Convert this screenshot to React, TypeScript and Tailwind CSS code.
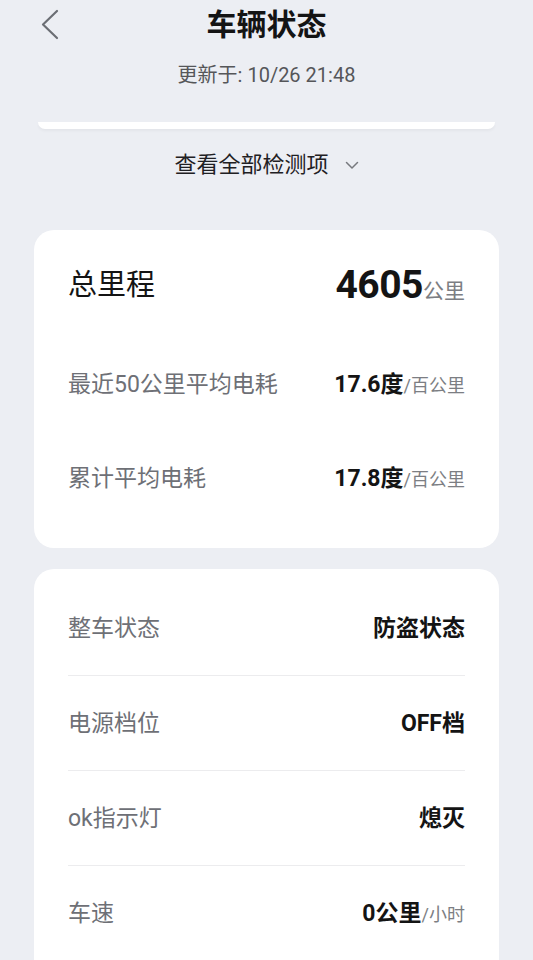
import React from "react";

const rows = [
  { label: "整车状态", value: "防盗状态" },
  { label: "电源档位", value: "OFF档" },
  { label: "ok指示灯", value: "熄灭" },
  { label: "车速", value: "0公里", unit: "/小时" },
];

export default function App() {
  return (
    <div className="h-[960px] w-[533px] bg-[#eceef3] font-['Roboto','Noto_Sans_CJK_SC',sans-serif] overflow-hidden">
      {/* header */}
      <div className="relative h-[50px] flex items-center justify-center">
        <svg
          className="absolute left-[40px] top-[9px]"
          width="20"
          height="31"
          viewBox="0 0 20 31"
          fill="none"
        >
          <path d="M17 2 L3 15.5 L17 29" stroke="#6b6e74" strokeWidth="2.2" strokeLinecap="round" strokeLinejoin="round" />
        </svg>
        <h1 className="text-[30px] font-bold text-[#141414] leading-none">车辆状态</h1>
      </div>
      <div className="mt-[11px] h-[28px] flex items-center justify-center text-[20px] text-[#555659] leading-none">
        更新于: 10/26 21:48
      </div>

      <div className="mt-[33px] mx-[38px] h-[7px] bg-white rounded-b-[12px] shadow-[0_2px_3px_rgba(0,0,0,0.04)]" />

      <div className="mt-[21px] h-[30px] flex items-center justify-center gap-[16px]">
        <span className="text-[22px] text-[#1f2023] leading-none">查看全部检测项</span>
        <svg width="14" height="9" viewBox="0 0 14 9" fill="none" className="mt-[1px]">
          <path d="M1.5 1.5 L7 7 L12.5 1.5" stroke="#77797e" strokeWidth="1.5" strokeLinecap="round" strokeLinejoin="round" />
        </svg>
      </div>

      {/* mileage card */}
      <div className="mt-[50px] mx-[34px] bg-white rounded-[20px] px-[34px] pt-[20px] pb-[38px]">
        <div className="h-[70px] flex items-center justify-between">
          <span className="text-[29px] text-[#141414] leading-none">总里程</span>
          <span className="flex items-baseline leading-none">
            <span className="text-[39px] font-bold text-[#141414] tracking-[-0.5px]">4605</span>
            <span className="text-[21px] text-[#7c7e83]">公里</span>
          </span>
        </div>
        <div className="mt-[32px] h-[64px] flex items-center justify-between">
          <span className="text-[23px] text-[#6e7076] leading-none">最近50公里平均电耗</span>
          <span className="flex items-baseline leading-none">
            <span className="text-[23px] font-bold text-[#141414]">17.6度</span>
            <span className="text-[18px] text-[#7c7e83]">/百公里</span>
          </span>
        </div>
        <div className="mt-[30px] h-[64px] flex items-center justify-between">
          <span className="text-[23px] text-[#6e7076] leading-none">累计平均电耗</span>
          <span className="flex items-baseline leading-none">
            <span className="text-[23px] font-bold text-[#141414]">17.8度</span>
            <span className="text-[18px] text-[#7c7e83]">/百公里</span>
          </span>
        </div>
      </div>

      {/* status card, continues below the fold */}
      <div className="mt-[21px] mx-[34px] bg-white rounded-t-[20px] px-[34px] pt-[12px] pb-[40px]">
        {rows.map((r) => (
          <div
            key={r.label}
            className="h-[95px] flex items-center justify-between border-b border-[#ececee]"
          >
            <span className="text-[23px] text-[#6e7076] leading-none">{r.label}</span>
            <span className="flex items-baseline leading-none">
              <span className="text-[23px] font-bold text-[#141414]">{r.value}</span>
              {r.unit && <span className="text-[18px] text-[#7c7e83]">{r.unit}</span>}
            </span>
          </div>
        ))}
      </div>
    </div>
  );
}
